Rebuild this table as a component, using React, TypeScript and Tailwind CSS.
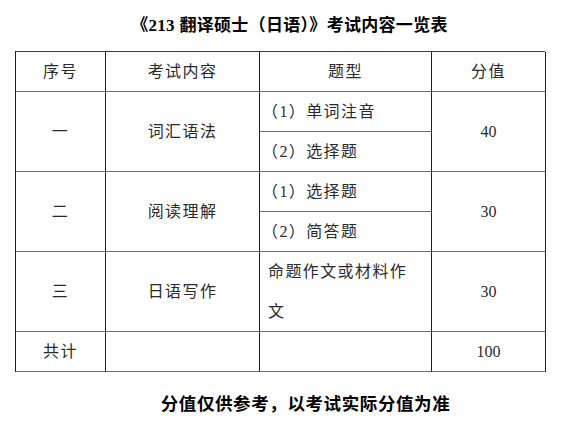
import React from "react";

const body = "font-['Liberation_Serif','Noto_Sans_CJK_SC',serif]";

const cellBase =
  "flex items-center border-r border-b border-r-[#1f1f1f] border-b-[#6a6a6a] text-[16px] tracking-[1.4px] text-[#2a2a2a]";

export default function App() {
  return (
    <div className={`w-[579px] h-[435px] bg-white flex flex-col ${body}`}>
      <div className="h-[51px] flex items-center justify-center pt-[1px]">
        <h1 className="text-[17px] font-bold text-black tracking-[0.3px]">
          《213 翻译硕士（日语）》考试内容一览表
        </h1>
      </div>
      <div className="ml-[15px] w-[530px] grid grid-cols-[90px_154px_172px_114px] grid-rows-[repeat(8,40px)] border-l border-t border-l-[#1f1f1f] border-t-[#3a3a3a]">
        {/* header */}
        <div className={`${cellBase} justify-center col-start-1 row-start-1`}>序号</div>
        <div className={`${cellBase} justify-center col-start-2 row-start-1`}>考试内容</div>
        <div className={`${cellBase} justify-center col-start-3 row-start-1`}>题型</div>
        <div className={`${cellBase} justify-center col-start-4 row-start-1`}>分值</div>

        {/* group 1 */}
        <div className={`${cellBase} justify-center col-start-1 row-start-2 row-span-2`}>一</div>
        <div className={`${cellBase} justify-center col-start-2 row-start-2 row-span-2`}>词汇语法</div>
        <div className={`${cellBase} pl-[2px] col-start-3 row-start-2`}>（1）单词注音</div>
        <div className={`${cellBase} pl-[2px] col-start-3 row-start-3`}>（2）选择题</div>
        <div className={`${cellBase} !tracking-normal justify-center col-start-4 row-start-2 row-span-2`}>40</div>

        {/* group 2 */}
        <div className={`${cellBase} justify-center col-start-1 row-start-4 row-span-2`}>二</div>
        <div className={`${cellBase} justify-center col-start-2 row-start-4 row-span-2`}>阅读理解</div>
        <div className={`${cellBase} pl-[2px] col-start-3 row-start-4`}>（1）选择题</div>
        <div className={`${cellBase} pl-[2px] col-start-3 row-start-5`}>（2）简答题</div>
        <div className={`${cellBase} !tracking-normal justify-center col-start-4 row-start-4 row-span-2`}>30</div>

        {/* group 3 */}
        <div className={`${cellBase} justify-center col-start-1 row-start-6 row-span-2`}>三</div>
        <div className={`${cellBase} justify-center col-start-2 row-start-6 row-span-2`}>日语写作</div>
        <div className={`${cellBase} pl-[8px] col-start-3 row-start-6 row-span-2`}>
          <p className="w-[150px] leading-[40px]">命题作文或材料作文</p>
        </div>
        <div className={`${cellBase} !tracking-normal justify-center col-start-4 row-start-6 row-span-2`}>30</div>

        {/* total */}
        <div className={`${cellBase} justify-center col-start-1 row-start-8`}>共计</div>
        <div className={`${cellBase} col-start-2 row-start-8`}></div>
        <div className={`${cellBase} col-start-3 row-start-8`}></div>
        <div className={`${cellBase} !tracking-normal justify-center col-start-4 row-start-8`}>100</div>
      </div>
      <div className="mt-[18px] flex justify-center pl-[32px]">
        <p className="text-[17.5px] font-bold text-black font-['Noto_Sans_CJK_SC',sans-serif] tracking-[0.6px]">
          分值仅供参考，以考试实际分值为准
        </p>
      </div>
    </div>
  );
}
